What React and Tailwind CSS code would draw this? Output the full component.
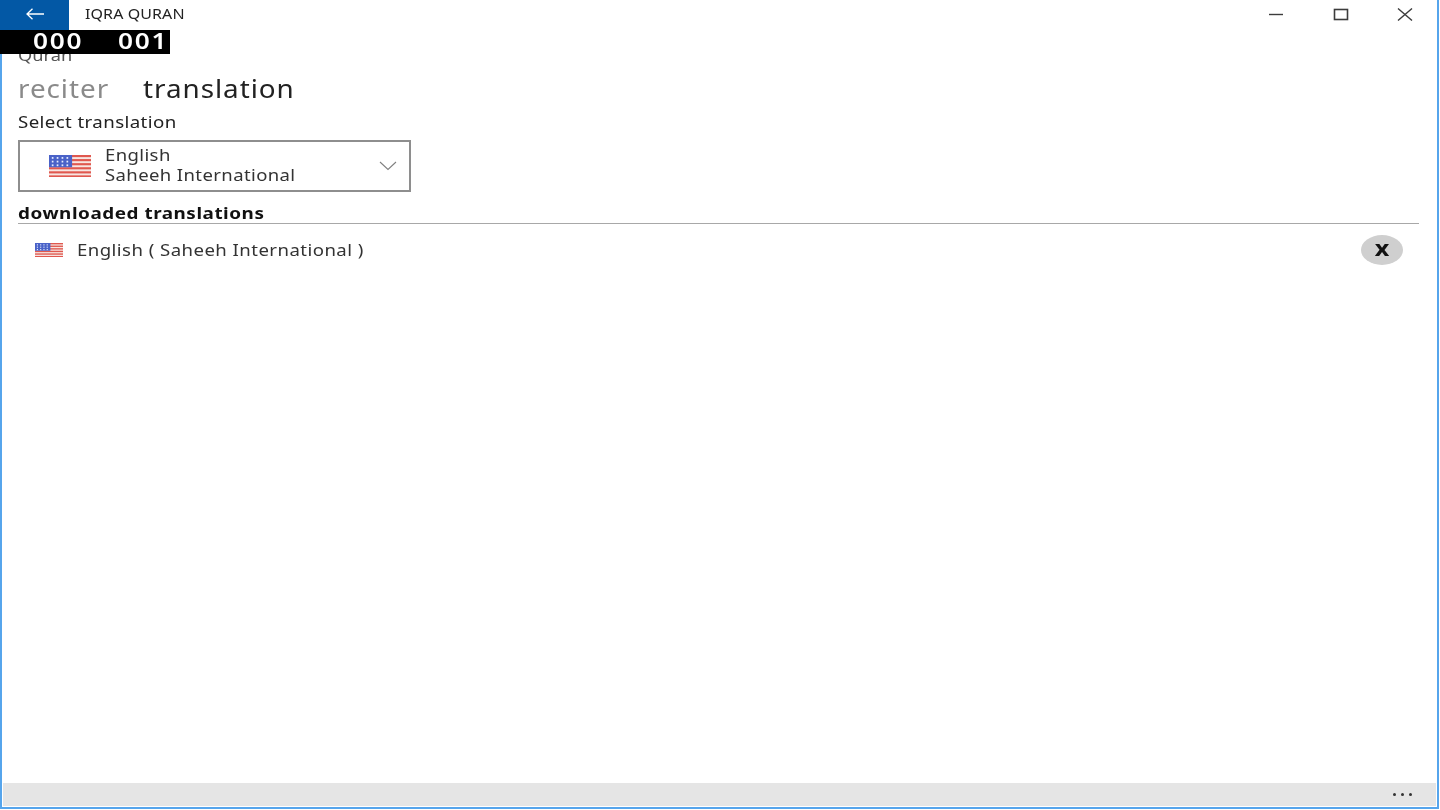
import React from "react";

function Flag({ className }) {
  const stripes = [];
  for (let i = 0; i < 6; i++) {
    stripes.push(<rect key={i} x="0" y={i * 5} width="60" height="2.6" fill="#e0584f" />);
  }
  const stars = [];
  for (let r = 0; r < 3; r++) {
    for (let c = 0; c < 4; c++) {
      stars.push(<rect key={r + "-" + c} x={4 + c * 7} y={2.5 + r * 4.5} width="2.4" height="2.2" fill="#e4ecff" />);
    }
  }
  return (
    <svg viewBox="0 0 60 27" preserveAspectRatio="none" className={className}>
      <rect width="60" height="27" fill="#f7e6e2" />
      {stripes}
      <rect width="33" height="15" fill="#4a62c8" />
      {stars}
    </svg>
  );
}

export default function App() {
  return (
    <div className="relative flex h-[810px] w-[1440px] flex-col overflow-hidden bg-white font-['Noto_Sans','Open_Sans',sans-serif] text-[#1c1c1c] blur-[0.4px]">
      <div className="mb-px mr-px flex min-h-0 flex-1 flex-col border-x-2 border-b-2 border-[#56a5ec]">
        <div className="-ml-[2px] flex h-[30px] shrink-0 items-center">
          <div className="flex h-[30px] w-[69px] items-center justify-center bg-[#0358a5] pb-[2px]">
            <svg width="18" height="12" viewBox="0 0 18 12" fill="none" stroke="#ffffff" strokeWidth="1.3">
              <path d="M1 6H18M6.5 .8L1 6l5.5 5.2" />
            </svg>
          </div>
          <span className="ml-4 inline-block origin-left scale-x-[1.14] pb-[3px] text-[14px] tracking-[0.1px] text-[#222]">IQRA QURAN</span>
          <div className="ml-auto flex items-center pb-[2px] pr-[24px]">
            <svg width="16" height="12" viewBox="0 0 16 12" fill="none" stroke="#3c3c3c" strokeWidth="1.4" className="mr-[49px]">
              <path d="M1 6.5H15" />
            </svg>
            <svg width="16" height="13" viewBox="0 0 16 13" fill="none" stroke="#3c3c3c" strokeWidth="1.6" className="mr-[48px]">
              <rect x="1.5" y="1.5" width="13" height="10" />
            </svg>
            <svg width="16" height="13" viewBox="0 0 16 13" fill="none" stroke="#3c3c3c" strokeWidth="1.4">
              <path d="M1 .5L15 12.5M15 .5L1 12.5" />
            </svg>
          </div>
        </div>

        <div className="flex min-h-0 flex-1 flex-col pl-[16px] pr-[18px]">
          <div className="h-[18px] pt-[15px] text-[16px] leading-[20px] text-[#555]">
            <span className="inline-block origin-left scale-x-[1.14]">Quran</span>
          </div>
          <div className="mt-[22px] flex items-baseline text-[26px] leading-[36px] tracking-[0.9px]">
            <span className="inline-block origin-left scale-x-[1.07] text-[#8a8a8a]">reciter</span>
            <span className="ml-[40px] inline-block origin-left scale-x-[1.07] text-[#222]">translation</span>
          </div>
          <div className="mt-[5px] text-[17px] leading-[22px] text-[#222]">
            <span className="inline-block origin-left scale-x-[1.1] tracking-[0.35px]">Select translation</span>
          </div>
          <div className="mt-[7px] flex h-[52px] w-[393px] items-center border-2 border-[#8e8e8e] pl-[29px] pr-[12px]">
            <Flag className="h-[22px] w-[42px] shrink-0" />
            <div className="ml-[14px] flex-1 pb-[2px] text-[17px] leading-[20px] tracking-[0.35px] text-[#333]">
              <div className="origin-left scale-x-[1.09]">English</div>
              <div className="origin-left scale-x-[1.09]">Saheeh International</div>
            </div>
            <svg width="18" height="10" viewBox="0 0 18 10" fill="none" stroke="#808080" strokeWidth="1.1">
              <path d="M1 1l8 7.5L17 1" />
            </svg>
          </div>
          <div className="mt-[11px] h-[21px] border-b-[1.5px] border-[#a8a8a8] text-[16px] font-bold leading-[20px] text-[#111]">
            <span className="inline-block origin-left scale-x-[1.18] tracking-[0.45px]">downloaded translations</span>
          </div>
          <div className="flex h-[52px] items-center pb-[1px] pl-[17px] pr-[16px]">
            <Flag className="h-[14px] w-[28px] shrink-0" />
            <span className="ml-[14px] inline-block origin-left scale-x-[1.095] text-[17px] tracking-[0.4px] text-[#333]">English ( Saheeh International )</span>
            <button className="ml-auto flex h-[30px] w-[42px] items-center justify-center rounded-[50%] bg-[#cfcfcf] pb-[3px] text-[21px] font-bold leading-none text-[#111]">
              <span className="inline-block scale-x-[1.2]">x</span>
            </button>
          </div>
        </div>

        <div className="mx-px mb-[1px] flex h-[23px] shrink-0 items-center justify-end gap-[5px] bg-[#e5e5e5] pr-[24px]">
          <span className="h-[3px] w-[3px] rounded-full bg-[#333]"></span>
          <span className="h-[3px] w-[3px] rounded-full bg-[#333]"></span>
          <span className="h-[3px] w-[3px] rounded-full bg-[#333]"></span>
        </div>
      </div>

      <div className="absolute left-0 top-[30px] flex h-[24px] w-[170px] items-center bg-black text-[21px] font-semibold tracking-[1.4px] text-white">
        <span className="ml-[33px] inline-block origin-left scale-x-[1.25]">000</span>
        <span className="ml-[45px] inline-block origin-left scale-x-[1.25]">001</span>
      </div>
    </div>
  );
}
